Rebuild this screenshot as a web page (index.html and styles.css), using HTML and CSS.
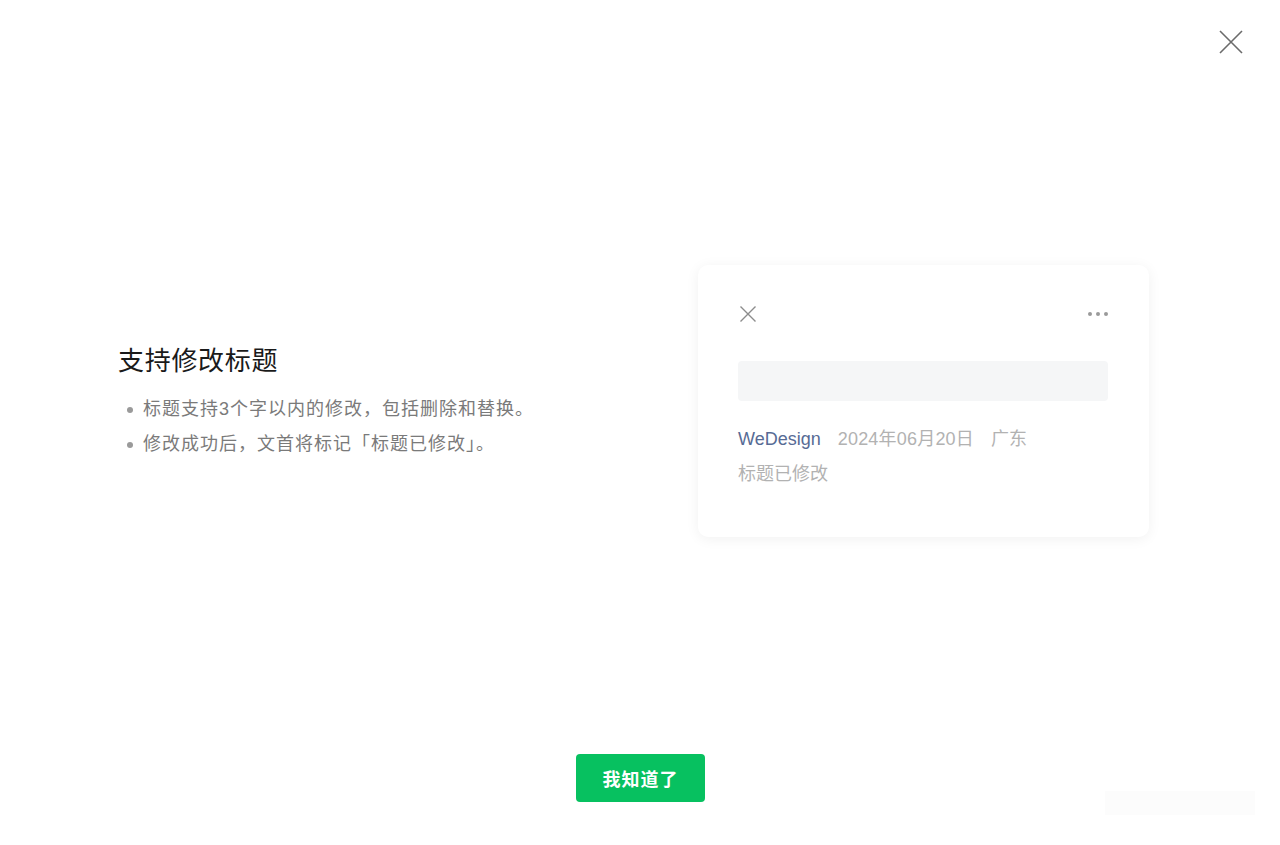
FILE: index.html
```html
<!DOCTYPE html>
<html lang="zh-CN">
<head>
<meta charset="utf-8">
<title>支持修改标题</title>
<link rel="stylesheet" href="styles.css">
</head>
<body>
<div class="page">
  <button class="close" aria-label="关闭">
    <svg width="26" height="26" viewBox="0 0 26 26"><path d="M2 2L24 24M24 2L2 24" stroke="#6b6b6b" stroke-width="1.6" fill="none"/></svg>
  </button>
  <div class="main">
    <div class="intro">
      <h1 class="title">支持修改标题</h1>
      <ul class="points">
        <li>标题支持3个字以内的修改，包括删除和替换。</li>
        <li>修改成功后，文首将标记「标题已修改」。</li>
      </ul>
    </div>
    <div class="card">
      <div class="card-head">
        <svg class="card-close" width="18" height="18" viewBox="0 0 18 18"><path d="M1.5 1.5L16.5 16.5M16.5 1.5L1.5 16.5" stroke="#8c8c8c" stroke-width="1.4" fill="none"/></svg>
        <svg class="card-more" width="22" height="6" viewBox="0 0 22 6"><circle cx="3" cy="3" r="2" fill="#9a9a9a"/><circle cx="11" cy="3" r="2" fill="#9a9a9a"/><circle cx="19" cy="3" r="2" fill="#9a9a9a"/></svg>
      </div>
      <div class="placeholder"></div>
      <div class="meta">
        <span class="author">WeDesign</span>
        <span class="date">2024年06月20日</span>
        <span class="loc">广东</span>
      </div>
      <div class="modified">标题已修改</div>
    </div>
  </div>
  <div class="footer">
    <button class="ok">我知道了</button>
  </div>
  <div class="ghost"></div>
</div>
</body>
</html>
```
FILE: styles.css
```css
* { box-sizing: border-box; }
html, body { margin: 0; padding: 0; background: #fff; }
body {
  font-family: "Liberation Sans", "Noto Sans CJK SC", sans-serif;
  color: #1a1a1a;
}
.page {
  position: relative;
  width: 1280px;
  height: 845px;
  display: flex;
  flex-direction: column;
}
.close {
  position: absolute;
  top: 29px;
  right: 36px;
  width: 26px;
  height: 26px;
  padding: 0;
  border: 0;
  background: none;
  cursor: pointer;
}
.close svg { display: block; }
.main {
  flex: 1;
  display: flex;
  align-items: center;
  justify-content: space-between;
  padding: 48px 131px 0 118px;
}
.intro { margin-top: 2px; }
.title {
  margin: 0 0 13px;
  font-size: 26px;
  font-weight: 400;
  line-height: 36px;
  letter-spacing: 0.7px;
  color: #1a1a1a;
}
.points {
  margin: 0;
  padding: 0;
  list-style: none;
}
.points li {
  position: relative;
  padding-left: 25px;
  font-size: 18px;
  line-height: 35px;
  color: #7a7a7a;
  letter-spacing: 1px;
}
.points li::before {
  content: "";
  position: absolute;
  left: 9px;
  top: 15px;
  width: 6px;
  height: 6px;
  border-radius: 50%;
  background: #9a9a9a;
}
.card {
  width: 451px;
  height: 272px;
  padding: 40px 41px 0 40px;
  background: #fff;
  border-radius: 10px;
  box-shadow: 0 2px 14px rgba(0, 0, 0, 0.06);
}
.card-head {
  display: flex;
  align-items: center;
  justify-content: space-between;
  height: 17px;
  margin-bottom: 39px;
}
.card-head svg { display: block; }
.card-close { margin-left: 1px; }
.card-more { margin-right: -1px; }
.placeholder {
  height: 40px;
  background: #f5f6f7;
  border-radius: 4px;
}
.meta {
  margin-top: 26px;
  display: flex;
  gap: 17px;
  font-size: 18px;
  line-height: 24px;
  color: #b2b2b2;
}
.author { color: #576b95; }
.date { letter-spacing: 0.2px; }
.modified {
  margin-top: 11px;
  font-size: 18px;
  line-height: 24px;
  color: #b2b2b2;
}
.footer {
  display: flex;
  justify-content: center;
  padding-bottom: 43px;
}
.ok {
  width: 129px;
  height: 48px;
  padding: 0;
  border: 0;
  border-radius: 4px;
  background: #07c160;
  color: #fff;
  font-family: "Noto Sans CJK SC", sans-serif;
  font-size: 18px;
  font-weight: 700;
  letter-spacing: 1px;
  text-indent: 1px;
  cursor: pointer;
}
.ghost {
  position: absolute;
  left: 1105px;
  top: 791px;
  width: 150px;
  height: 24px;
  background: #fcfcfc;
}
```
